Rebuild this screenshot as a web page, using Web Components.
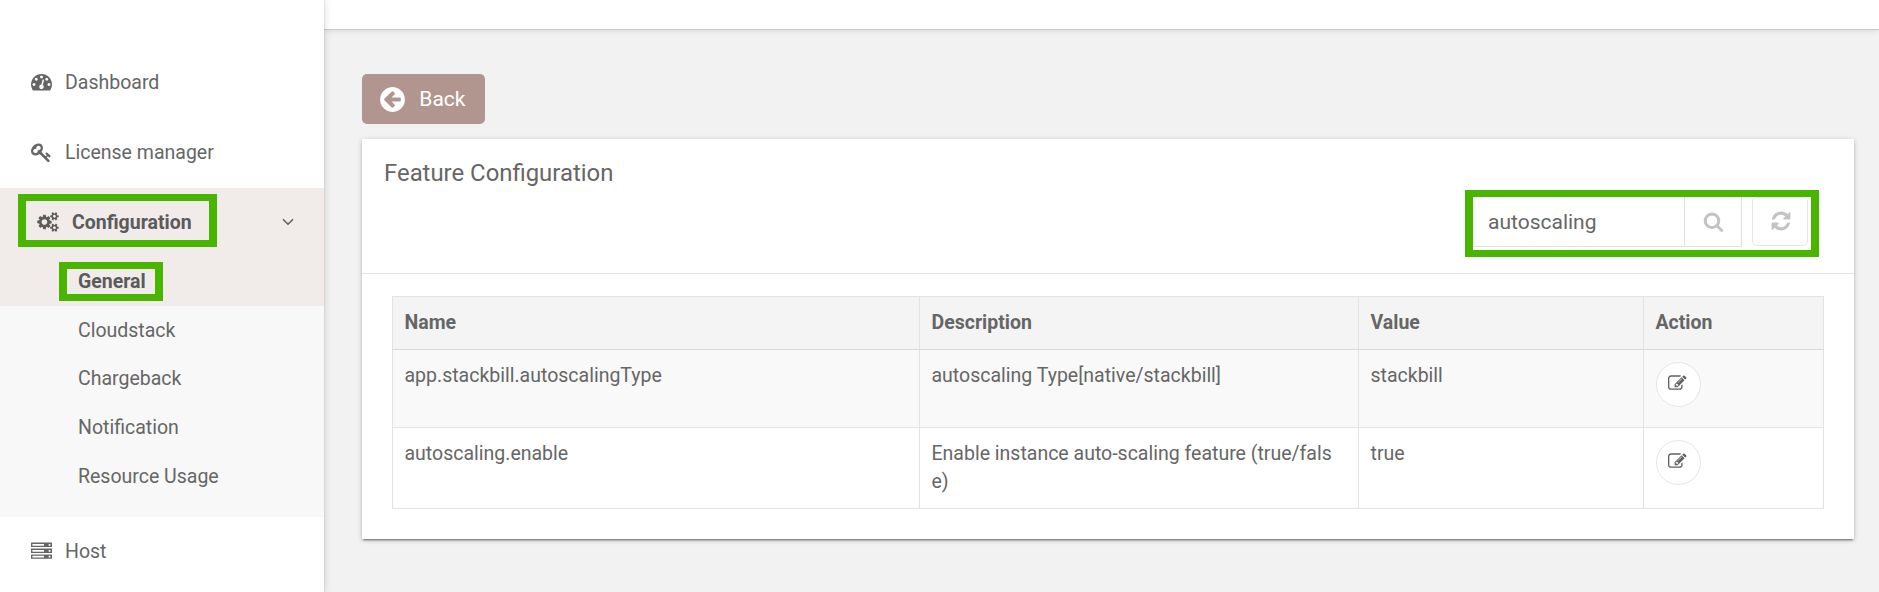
<!DOCTYPE html>
<html lang="en">
<head>
<meta charset="utf-8">
<title>Feature Configuration</title>
<style>
html,body{margin:0;height:100%;overflow:hidden}
body{font-family:Roboto,"Liberation Sans",sans-serif;font-size:19.5px;line-height:28px;color:#666;background:#f2f2f2}
</style>
</head>
<body>
<app-shell>
  <side-bar slot="side">
    <nav-item icon="dashboard">Dashboard</nav-item>
    <nav-item icon="key">License manager</nav-item>
    <nav-group>
      <nav-item slot="head" icon="cogs" active>Configuration</nav-item>
      <sub-item active>General</sub-item>
      <sub-item>Cloudstack</sub-item>
      <sub-item>Chargeback</sub-item>
      <sub-item>Notification</sub-item>
      <sub-item>Resource Usage</sub-item>
    </nav-group>
    <nav-item icon="server">Host</nav-item>
  </side-bar>
  <back-button>Back</back-button>
  <feature-card heading="Feature Configuration">
    <search-tools slot="tools" value="autoscaling"></search-tools>
    <config-table></config-table>
  </feature-card>
</app-shell>
<script>
const ICONS = {
  dashboard: ['0 0 1792 1792', 'M384 1152q0-53-37.5-90.5t-90.5-37.5-90.5 37.5-37.5 90.5 37.5 90.5 90.5 37.5 90.5-37.5 37.5-90.5zm192-448q0-53-37.5-90.5t-90.5-37.5-90.5 37.5-37.5 90.5 37.5 90.5 90.5 37.5 90.5-37.5 37.5-90.5zm428 481l101-382q6-26-7.5-48.5t-38.5-29.5-48 6.5-30 39.5l-101 382q-60 5-107 43.5t-63 98.5q-20 77 20 146t117 89 146-20 89-117q16-60-6-117t-72-91zm660-33q0-53-37.5-90.5t-90.5-37.5-90.5 37.5-37.5 90.5 37.5 90.5 90.5 37.5 90.5-37.5 37.5-90.5zm-640-640q0-53-37.5-90.5t-90.5-37.5-90.5 37.5-37.5 90.5 37.5 90.5 90.5 37.5 90.5-37.5 37.5-90.5zm448 192q0-53-37.5-90.5t-90.5-37.5-90.5 37.5-37.5 90.5 37.5 90.5 90.5 37.5 90.5-37.5 37.5-90.5zm320 448q0 261-141 483-19 29-54 29h-1402q-35 0-54-29-141-221-141-483 0-182 71-348t191-286 286-191 348-71 348 71 286 191 191 286 71 348z'],
  key: ['0 0 1792 1792', 'M832 512q0-80-56-136t-136-56-136 56-56 136q0 42 19 83-41-19-83-19-80 0-136 56t-56 136 56 136 136 56 136-56 56-136q0-42-19-83 41 19 83 19 80 0 136-56t56-136zm851 704q0 17-49 66t-66 49q-9 0-28.5-16t-36.5-33-38.5-40-24.5-26l-96 96 220 220q28 28 28 68 0 42-39 81t-81 39q-40 0-68-28l-671-671q-176 131-365 131-163 0-265.5-102.5t-102.5-265.5q0-160 95-313t248-248 313-95q163 0 265.5 102.5t102.5 265.5q0 189-131 365l355 355 96-96q-3-3-26-24.5t-40-38.5-33-36.5-16-28.5q0-17 49-66t66-49q13 0 23 10 6 6 46 44.5t82 79.5 86.5 86 73 78 28.5 41z'],
  cogs: ['0 0 1920 1792', 'M896 896q0-106-75-181t-181-75-181 75-75 181 75 181 181 75 181-75 75-181zm768 512q0-52-38-90t-90-38-90 38-38 90q0 53 37.5 90.5t90.5 37.5 90.5-37.5 37.5-90.5zm0-1024q0-52-38-90t-90-38-90 38-38 90q0 53 37.5 90.5t90.5 37.5 90.5-37.5 37.5-90.5zm-384 421v185q0 10-7 19.5t-16 10.5l-155 24q-11 35-32 76 34 48 90 115 7 11 7 20 0 12-7 19-23 30-82.5 89.5t-78.5 59.5q-11 0-21-7l-115-90q-37 19-77 31-11 108-23 155-7 24-30 24h-186q-11 0-20-7.5t-10-17.5l-23-153q-34-10-75-31l-118 89q-7 7-20 7-11 0-21-8-144-133-144-160 0-9 7-19 10-14 41-53t47-61q-23-44-35-82l-152-24q-10-1-17-9.5t-7-19.5v-185q0-10 7-19.5t16-10.5l155-24q11-35 32-76-34-48-90-115-7-11-7-20 0-12 7-20 22-30 82-89t79-59q11 0 21 7l115 90q34-18 77-32 11-108 23-154 7-24 30-24h186q11 0 20 7.5t10 17.5l23 153q34 10 75 31l118-89q8-7 20-7 11 0 21 8 144 133 144 160 0 8-7 19-12 16-42 54t-45 60q23 48 34 82l152 23q10 2 17 10.5t7 19.5zm640 533v140q0 16-149 31-12 27-30 52 51 113 51 138 0 4-4 7-122 71-124 71-8 0-46-47t-52-68q-20 2-30 2t-30-2q-14 21-52 68t-46 47q-2 0-124-71-4-3-4-7 0-25 51-138-18-25-30-52-149-15-149-31v-140q0-16 149-31 13-29 30-52-51-113-51-138 0-4 4-7 4-2 35-20t59-34 30-16q8 0 46 46.5t52 67.5q20-2 30-2t30 2q51-71 92-112l6-2q4 0 124 70 4 3 4 7 0 25-51 138 17 23 30 52 149 15 149 31zm0-1024v140q0 16-149 31-12 27-30 52 51 113 51 138 0 4-4 7-122 71-124 71-8 0-46-47t-52-68q-20 2-30 2t-30-2q-14 21-52 68t-46 47q-2 0-124-71-4-3-4-7 0-25 51-138-18-25-30-52-149-15-149-31v-140q0-16 149-31 13-29 30-52-51-113-51-138 0-4 4-7 4-2 35-20t59-34 30-16q8 0 46 46.5t52 67.5q20-2 30-2t30 2q51-71 92-112l6-2q4 0 124 70 4 3 4 7 0 25-51 138 17 23 30 52 149 15 149 31z'],
  server: ['0 0 21 21', 'M0 2.5h21v4.6h-21zM1.4 3.9v1.8h11.6v-1.8zM17.7 3.9v1.8h1.7v-1.8zM0 8.5h21v4.6h-21zM1.4 9.9v1.8h11.6v-1.8zM17.7 9.9v1.8h1.7v-1.8zM0 14.5h21v4.3h-21zM1.4 15.8v1.7h11.6v-1.7zM17.7 15.8v1.7h1.7v-1.7z'],
  search: ['0 0 1792 1792', 'M1216 832q0-185-131.5-316.5t-316.5-131.5-316.5 131.5-131.5 316.5 131.5 316.5 316.5 131.5 316.5-131.5 131.5-316.5zm512 832q0 52-38 90t-90 38q-54 0-90-38l-343-342q-179 124-399 124-143 0-273.5-55.5t-225-150-150-225-55.5-273.5 55.5-273.5 150-225 225-150 273.5-55.5 273.5 55.5 225 150 150 225 55.5 273.5q0 220-124 399l343 343q37 37 37 90z'],
  refresh: ['0 0 1792 1792', 'M1639 1056q0 5-1 7-64 268-268 434.5t-478 166.5q-146 0-282.5-55t-243.5-157l-129 129q-19 19-45 19t-45-19-19-45v-448q0-26 19-45t45-19h448q26 0 45 19t19 45-19 45l-137 137q71 66 161 102t187 36q134 0 250-65t186-179q11-17 53-117 8-23 30-23h192q13 0 22.5 9.5t9.5 22.5zm25-800v448q0 26-19 45t-45 19h-448q-26 0-45-19t-19-45 19-45l138-138q-148-137-349-137-134 0-250 65t-186 179q-11 17-53 117-8 23-30 23h-199q-13 0-22.5-9.5t-9.5-22.5v-7q65-268 270-434.5t480-166.5q146 0 284 55.5t245 156.5l130-129q19-19 45-19t45 19 19 45z'],
  edit: ['0 0 1792 1792', 'M888 1184l116-116-152-152-116 116v56h96v96h56zm440-720q-16-16-33 1l-350 350q-17 17-1 33t33-1l350-350q17-17 1-33zm80 594v190q0 119-84.5 203.5t-203.5 84.5h-832q-119 0-203.5-84.5t-84.5-203.5v-832q0-119 84.5-203.5t203.5-84.5h832q63 0 117 25 15 7 18 23 3 17-9 29l-49 49q-14 14-32 8-23-6-45-6h-832q-66 0-113 47t-47 113v832q0 66 47 113t113 47h832q66 0 113-47t47-113v-126q0-13 9-22l64-64q15-15 35-7t20 29zm-96-738l288 288-672 672h-288v-288zm444 132l-92 92-288-288 92-92q28-28 68-28t68 28l152 152q28 28 28 68t-28 68z'],
  back: ['0 0 1792 1792', 'M1408 960v-128q0-26-19-45t-45-19h-502l189-189q19-19 19-45t-19-45l-91-91q-18-18-45-18t-45 18l-362 362-91 91q-18 18-18 45t18 45l91 91 362 362q18 18 45 18t45-18l91-91q18-18 18-45t-18-45l-189-189h502q26 0 45-19t19-45zm256-64q0 209-103 385.5t-279.5 279.5-385.5 103-385.5-103-279.5-279.5-103-385.5 103-385.5 279.5-279.5 385.5-103 385.5 103 279.5 279.5 103 385.5z'],
};
const icon = (name, w, h = w) =>
  `<svg class="ic" width="${w}" height="${h}" viewBox="${ICONS[name][0]}" fill="currentColor"><path fill-rule="evenodd" d="${ICONS[name][1]}"/></svg>`;
// Green highlight frame laid over its positioned parent.
const FRAME = '.frame{position:absolute;box-sizing:border-box;border:solid #49b500;border-width:7px 8px;pointer-events:none}';

function define(tag, render) {
  customElements.define(tag, class extends HTMLElement {
    constructor() { super(); this.attachShadow({mode: 'open'}); }
    connectedCallback() { this.shadowRoot.innerHTML = render(this); }
  });
}

define('app-shell', () => `<style>
  :host{display:grid;grid-template-columns:324px 1fr;height:592px}
  .main{display:flex;flex-direction:column;min-width:0}
  header{height:29px;background:#fff;border-bottom:1px solid #cbcdcc;box-shadow:0 1px 6px rgba(0,0,0,.1)}
  .body{padding:44px 25px 0 38px;display:flex;flex-direction:column;align-items:flex-start;gap:15px}
  ::slotted(feature-card){align-self:stretch}
</style><slot name="side"></slot><div class="main"><header></header><div class="body"><slot></slot></div></div>`);

define('side-bar', () => `<style>
  :host{display:flex;flex-direction:column;box-sizing:border-box;padding-top:47px;background:#fff;position:relative;z-index:1;box-shadow:0 0 1px rgba(0,0,0,.3),1px 0 8px rgba(0,0,0,.12)}
</style><slot></slot>`);

define('nav-item', el => {
  const name = el.getAttribute('icon');
  const active = el.hasAttribute('active');
  return `<style>
  :host{display:flex;align-items:center;box-sizing:border-box;height:70.4px;padding-left:31px}
  :host([active]){height:69.6px;font-weight:700;padding-left:37px;color:#5b5b5b;position:relative}
  :host([icon=server]){height:69px}
  .ic{margin-right:13px;margin-bottom:1px;overflow:visible}
  .chev{margin-left:auto;margin-right:30px;margin-bottom:1px}
  ${FRAME}.frame{left:18px;top:6px;width:199px;height:53px}
  span{padding-top:1px}
</style>${active ? icon(name, 22, 20) : icon(name, 21)}<span><slot></slot></span>${active ? '<svg class="chev" width="12" height="8" viewBox="0 0 12 8" fill="none" stroke="currentColor" stroke-width="1.5"><path d="M1 1.2l5 5 5-5"/></svg><div class="frame"></div>' : ''}`;
});

define('nav-group', () => `<style>
  :host{display:block;background:#f8f8f8;padding-bottom:15.2px}
  ::slotted(nav-item){background:#f1ecea}
</style><slot name="head"></slot><slot></slot>`);

define('sub-item', el => `<style>
  :host{display:flex;align-items:center;box-sizing:border-box;height:48.8px;padding-left:78px}
  :host([active]){background:#f1ecea;font-weight:700;color:#5b5b5b;position:relative}
  ${FRAME}.frame{left:59px;top:5px;width:104px;height:39px}
</style><slot></slot>${el.hasAttribute('active') ? '<div class="frame"></div>' : ''}`);

define('back-button', () => `<style>
  :host{display:inline-flex;align-items:center;box-sizing:border-box;width:123px;height:50px;padding-left:16px;gap:12.3px;border-radius:5px;background:#b1968f;color:#fff;font-size:21px}
</style>${icon('back', 29)}<span><slot></slot></span>`);

define('feature-card', el => `<style>
  :host{display:block;height:400px;background:#fff;box-shadow:0 2px 2px -1px rgba(0,0,0,.5),0 1px 5px rgba(0,0,0,.22)}
  .head{box-sizing:border-box;height:135px;border-bottom:1px solid #e5e5e5;padding:20px 35px 0 22px;display:flex;justify-content:space-between}
  h2{margin:0;font-size:23.9px;font-weight:400;line-height:28px}
  ::slotted(search-tools){margin-top:31px}
  .content{padding:22px 30px 0}
</style><div class="head"><h2>${el.getAttribute('heading')}</h2><slot name="tools"></slot></div><div class="content"><slot></slot></div>`);

define('search-tools', el => `<style>
  :host{display:flex;align-items:flex-start;box-sizing:border-box;width:354px;height:67px;padding:7px 8px;position:relative;font-size:21px}
  .field{display:flex;box-sizing:border-box;width:269px;height:50px;border:solid #e2e2e2;border-width:0 1px 1px 0}
  .text{box-sizing:border-box;width:212px;padding:1px 0 0 15px;line-height:48px;border-right:1px solid #e2e2e2}
  .find,.again{display:flex;align-items:center;justify-content:center;color:#c3c3c3}
  .find{flex:1}
  .again{box-sizing:border-box;width:56px;height:49px;margin-left:10px;padding:0 0 2px 1px;border:1px solid #e6e6e6;border-radius:5px}
  ${FRAME}.frame{inset:0}
</style><div class="field"><div class="text">${el.getAttribute('value')}</div><div class="find">${icon('search', 21)}</div></div><div class="again">${icon('refresh', 22)}</div><div class="frame"></div>`);

define('config-table', () => {
  const rows = [['app.stackbill.autoscalingType', 'autoscaling Type[native/stackbill]', 'stackbill'],
                ['autoscaling.enable', 'Enable instance auto-scaling feature (true/false)', 'true']];
  return `<style>
  :host{display:block}
  table{border-collapse:collapse;table-layout:fixed;width:1432px}
  th,td{box-sizing:border-box;border:1px solid #e3e3e3;padding:12px 11.5px 0;text-align:left;vertical-align:top;word-break:break-all}
  th{height:53px;background:#f4f4f4;border-bottom-color:#dadada}
  tbody tr:nth-child(1){height:78px;background:#f9f9f9}
  tbody tr:nth-child(2){height:81px}
</style><table><colgroup><col style="width:527px"><col style="width:439px"><col style="width:285px"><col></colgroup>
<thead><tr><th>Name</th><th>Description</th><th>Value</th><th>Action</th></tr></thead>
<tbody>${rows.map(r => `<tr>${r.map(c => `<td>${c}</td>`).join('')}<td><edit-button></edit-button></td></tr>`).join('')}</tbody></table>`;
});

define('edit-button', () => `<style>
  :host{display:flex;align-items:center;justify-content:center;box-sizing:border-box;width:45px;height:45px;border:1px solid #e6e6e6;border-radius:50%;background:#fff;color:#606060}
  .ic{margin:0 1px 2px 0}
</style>${icon('edit', 18.5)}`);
</script>
</body>
</html>
